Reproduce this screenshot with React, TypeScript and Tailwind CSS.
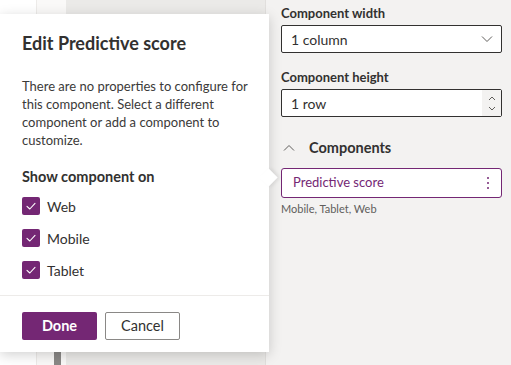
import React from 'react';

const font = { fontFamily: 'Lato, "Noto Sans", Arial, sans-serif' };

function Check() {
  return (
    <div className="w-[18px] h-[18px] rounded-[2px] bg-[#742774] flex items-center justify-center">
      <svg width="12" height="12" viewBox="0 0 12 12" fill="none">
        <path d="M2 6.3 L4.8 9 L10 3.4" stroke="#ffffff" strokeWidth="1.1" strokeLinecap="round" strokeLinejoin="round" />
      </svg>
    </div>
  );
}

const platforms = ['Web', 'Mobile', 'Tablet'];

export default function App() {
  return (
    <div className="relative w-[511px] h-[365px] overflow-hidden flex bg-[#f3f2f1] text-[#323130]" style={font}>
      {/* background canvas behind the callout */}
      <div className="flex w-[266px] h-full">
        <div className="w-[37px] h-full bg-white border-r border-[#edebe9]" />
        <div className="w-[29px] h-full bg-[#faf9f8] flex flex-col justify-end pl-[17px]">
          <div className="w-[7px] h-[14px] bg-[#8a8886]" />
        </div>
        <div className="flex-1 h-full bg-[#ebeae8] border-r border-[#e1dfdd]" />
      </div>

      {/* property pane */}
      <div className="flex-1 pl-[15px] pr-[9px] pt-[3px]">
        <div className="text-[13px] font-bold leading-[20px]">Component width</div>
        <div className="mt-[2px] h-[28px] border border-[#323130] rounded-[2px] bg-white flex items-center justify-between pl-[9px] pr-[8px]">
          <span className="text-[14px]">1 column</span>
          <svg width="12" height="8" viewBox="0 0 12 8" fill="none">
            <path d="M1 1.5 L6 6.5 L11 1.5" stroke="#605e5c" strokeWidth="1" />
          </svg>
        </div>
        <div className="mt-[14px] text-[13px] font-bold leading-[20px]">Component height</div>
        <div className="mt-[2px] h-[28px] border border-[#323130] rounded-[2px] bg-white flex items-center justify-between pl-[9px]">
          <span className="text-[14px]">1 row</span>
          <div className="w-[19px] h-full bg-[#f3f2f1] flex flex-col items-center justify-center gap-[5px]">
            <svg width="8" height="5" viewBox="0 0 8 5" fill="none">
              <path d="M1 4 L4 1 L7 4" stroke="#605e5c" strokeWidth="1" />
            </svg>
            <svg width="8" height="5" viewBox="0 0 8 5" fill="none">
              <path d="M1 1 L4 4 L7 1" stroke="#605e5c" strokeWidth="1" />
            </svg>
          </div>
        </div>
        <div className="mt-[21px] flex items-center h-[20px]">
          <svg width="12" height="8" viewBox="0 0 12 8" fill="none" className="ml-[2px]">
            <path d="M1 6.5 L6 1.5 L11 6.5" stroke="#605e5c" strokeWidth="1" />
          </svg>
          <span className="ml-[14px] text-[14.5px] font-bold">Components</span>
        </div>
        <div className="mt-[10px] h-[30px] border border-[#742774] rounded-[3px] bg-white flex items-center justify-between pl-[11px] pr-[12px]">
          <span className="text-[13px] text-[#742774]">Predictive score</span>
          <div className="flex flex-col gap-[3px]">
            <div className="w-[2px] h-[2px] rounded-full bg-[#742774]" />
            <div className="w-[2px] h-[2px] rounded-full bg-[#742774]" />
            <div className="w-[2px] h-[2px] rounded-full bg-[#742774]" />
          </div>
        </div>
        <div className="mt-[3px] text-[11px] text-[#605e5c]">Mobile, Tablet, Web</div>
      </div>

      {/* callout */}
      <div className="absolute left-0 top-[14px] w-[269px] h-[338px] bg-white shadow-[0_3px_12px_rgba(0,0,0,0.18)] flex flex-col">
        <div className="absolute right-[-6px] top-[157px] w-[13px] h-[13px] bg-white rotate-45 shadow-[2px_-2px_4px_rgba(0,0,0,0.08)]" />
        <div className="relative flex-1 pl-[22px] pr-[18px] pt-[16px]">
          <h1 className="text-[18px] font-bold leading-[26px]">Edit Predictive score</h1>
          <p className="mt-[21px] text-[13px] leading-[18px] text-[#3b3a39]">
            There are no properties to configure for this component. Select a different component or add a component to customize.
          </p>
          <div className="mt-[18px] text-[14.5px] font-bold leading-[20px]">Show component on</div>
          <div className="mt-[10px] flex flex-col gap-[14px]">
            {platforms.map((p) => (
              <label key={p} className="flex items-center gap-[7px] h-[18px]">
                <Check />
                <span className="text-[14px]">{p}</span>
              </label>
            ))}
          </div>
        </div>
        <div className="relative border-t border-[#edebe9] h-[57px] px-[22px] flex items-start pt-[16px] gap-[8px]">
          <button className="w-[75px] h-[28px] rounded-[2px] bg-[#742774] text-white text-[14.5px] font-bold">Done</button>
          <button className="w-[75px] h-[28px] rounded-[2px] border border-[#8a8886] bg-white text-[14.5px] text-[#323130]">Cancel</button>
        </div>
      </div>
    </div>
  );
}
